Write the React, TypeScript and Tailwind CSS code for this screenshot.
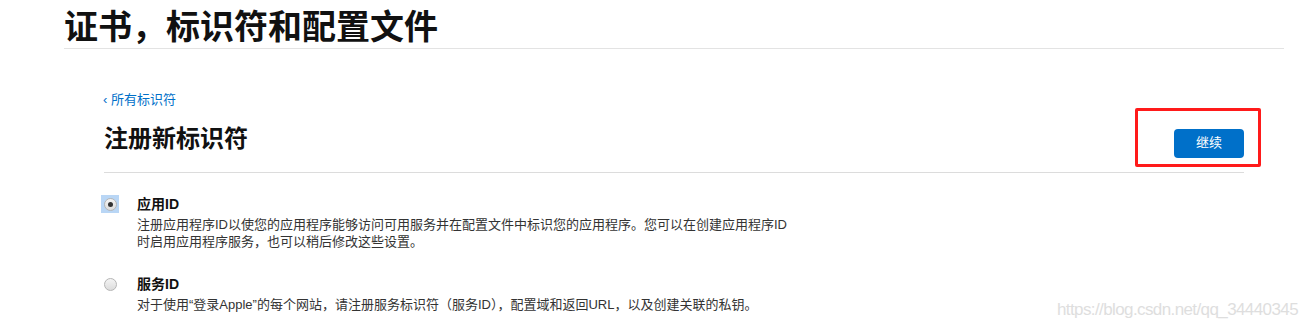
import React from "react";

const font = { fontFamily: '"Liberation Sans", "Noto Sans CJK SC", sans-serif' };

function Radio({ checked }: { checked?: boolean }) {
  return (
    <div
      className={
        "w-[18px] h-[18px] flex items-center justify-center shrink-0 " +
        (checked ? "bg-[#b9d6f5]" : "")
      }
    >
      <div className="w-[13px] h-[13px] rounded-full border border-[#b5b5b5] bg-gradient-to-b from-[#f4f4f4] to-[#dcdcdc] flex items-center justify-center">
        {checked && <div className="w-[5px] h-[5px] rounded-full bg-[#333]" />}
      </div>
    </div>
  );
}

interface OptionProps {
  checked?: boolean;
  title: string;
  children: React.ReactNode;
}

function Option({ checked, title, children }: OptionProps) {
  return (
    <div className="flex gap-[18px]">
      <div className="pt-[1px]">
        <Radio checked={checked} />
      </div>
      <div>
        <div className="text-[14px] font-bold text-[#111] leading-[20px]">{title}</div>
        <div className="text-[13px] text-[#333] leading-[17px] mt-[2px]">{children}</div>
      </div>
    </div>
  );
}

export default function App() {
  return (
    <div className="w-[1308px] h-[328px] bg-white overflow-hidden relative" style={font}>
      <div className="pl-[64px] pr-[24px] pt-[8px]">
        <h1 className="text-[34px] font-bold text-[#111] leading-[39px]">
          证书，标识符和配置文件
        </h1>
        <div className="h-px bg-[#e3e3e3] mt-[1px]" />
      </div>

      <div className="pl-[103px] pr-[64px] pt-[43px]">
        <div className="text-[13px] text-[#0070c9] leading-[16px]">‹ 所有标识符</div>
        <div className="flex items-center justify-between mt-[12px] h-[46px]">
          <h2 className="text-[24px] font-bold text-[#111] pl-px mb-[8px]">注册新标识符</h2>
          <div className="border-[3px] border-[#ff1a1a] rounded-[2px] w-[126px] h-[59px] mr-[-17px] mt-[-12px] flex items-end justify-end pr-[14px] pb-[6px]">
            <button className="w-[70px] h-[29px] rounded-[4px] bg-[#0070c9] text-white text-[13px]">
              继续
            </button>
          </div>
        </div>
        <div className="h-px bg-[#dcdcdc] mt-[6px] ml-px" />
      </div>

      <div className="pl-[101px] pt-[21px] flex flex-col gap-[24px]">
        <Option checked title="应用ID">
          注册应用程序ID以使您的应用程序能够访问可用服务并在配置文件中标识您的应用程序。您可以在创建应用程序ID
          <br />
          时启用应用程序服务，也可以稍后修改这些设置。
        </Option>
        <Option title="服务ID">
          对于使用“登录Apple”的每个网站，请注册服务标识符（服务ID），配置域和返回URL，以及创建关联的私钥。
        </Option>
      </div>

      <div
        className="absolute right-[10px] top-[297px] text-[17px] text-[#dedede] tracking-[-0.6px]"
        style={{ fontFamily: '"Liberation Sans Narrow", "Liberation Sans", sans-serif' }}
      >
        https://blog.csdn.net/qq_34440345
      </div>
    </div>
  );
}
